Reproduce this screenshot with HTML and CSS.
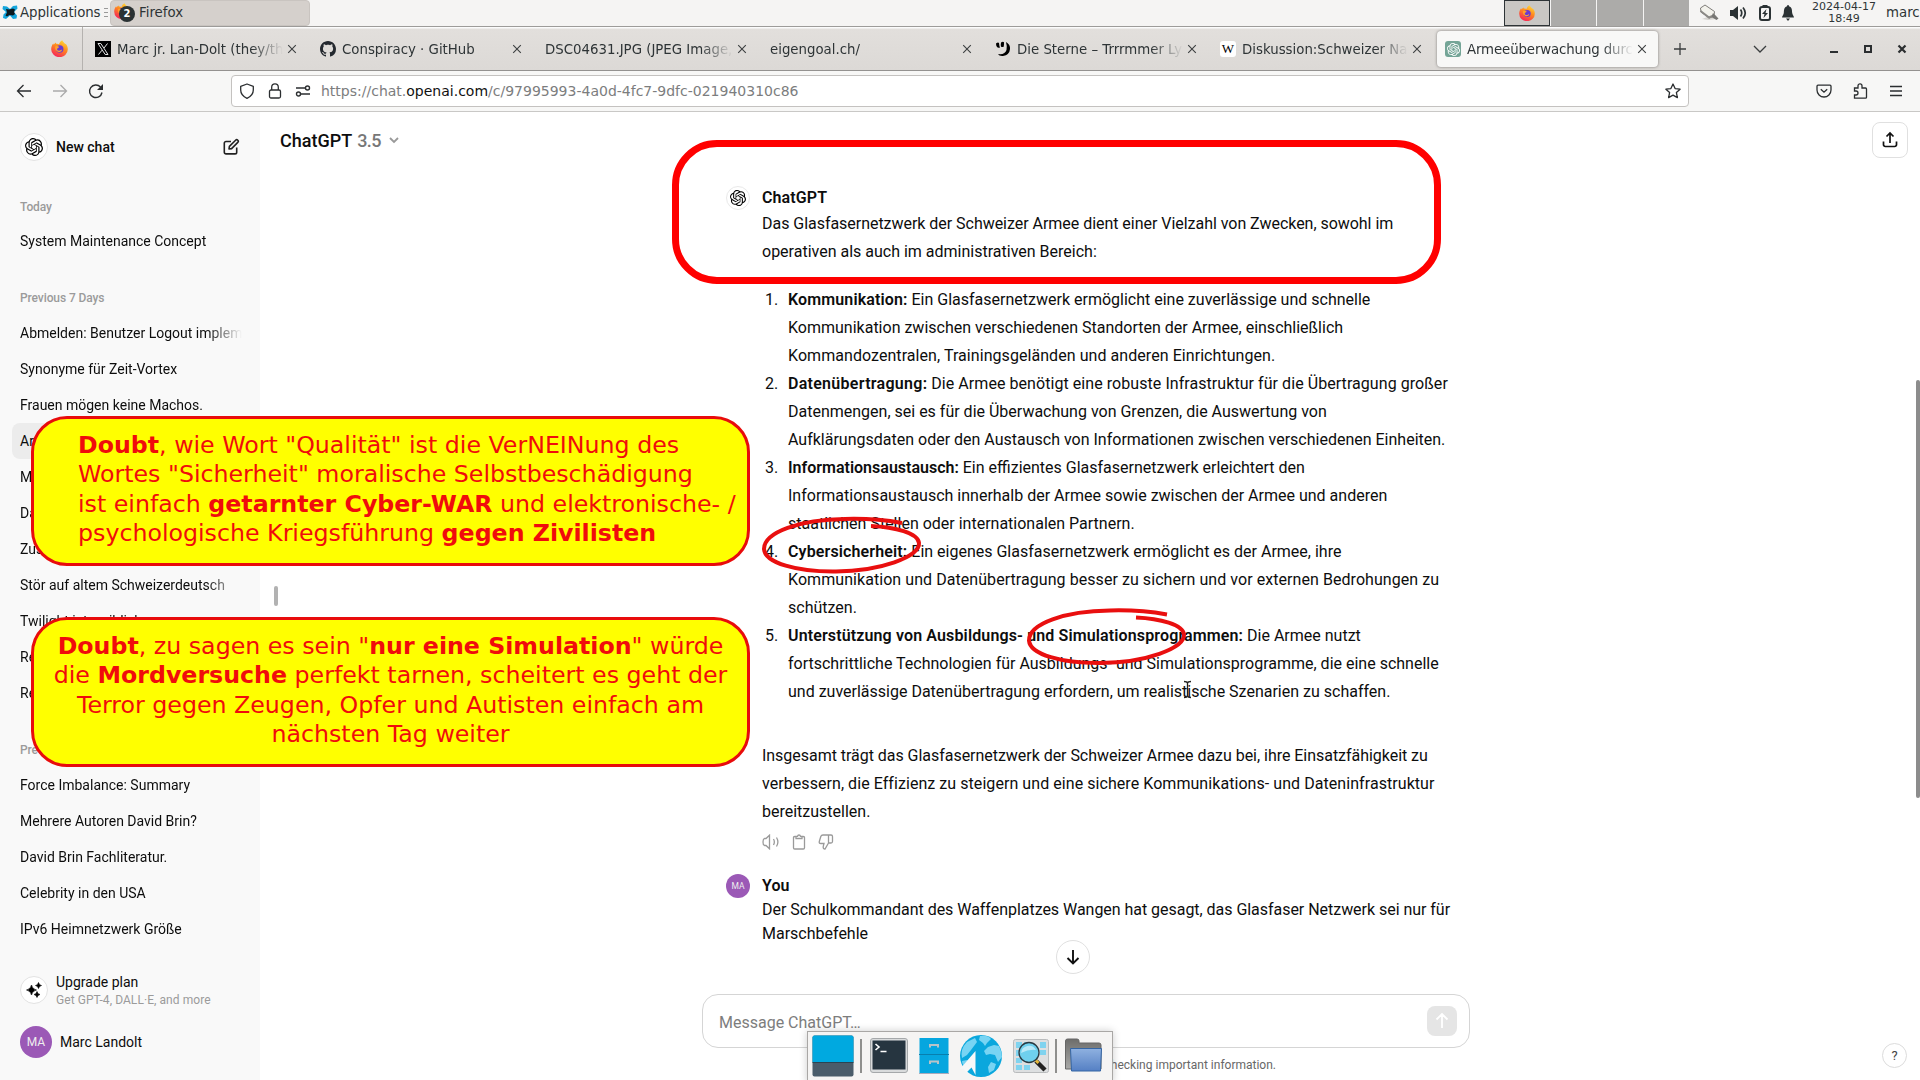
FILE: index.html
```html
<!DOCTYPE html>
<html lang="de">
<head>
<meta charset="utf-8">
<title>Armeeüberwachung durch Glasfaser</title>
<link rel="stylesheet" href="styles.css">
</head>
<body>
<svg width="0" height="0" class="defs">
  <defs>
    <linearGradient id="fx" x1=".8" y1="0" x2=".3" y2="1"><stop offset="0" stop-color="#ffe03a"/><stop offset=".45" stop-color="#ff8a1e"/><stop offset="1" stop-color="#f5225c"/></linearGradient>
    <linearGradient id="fold" x1="0" y1="0" x2="0" y2="1"><stop offset="0" stop-color="#8fb1e0"/><stop offset="1" stop-color="#5580c4"/></linearGradient>
    <linearGradient id="foldback" x1="0" y1="0" x2="0" y2="1"><stop offset="0" stop-color="#6d6d6b"/><stop offset="1" stop-color="#a9a9a7"/></linearGradient>
    <symbol id="firefox" viewBox="0 0 16 16"><path fill="url(#fx)" d="M10.6.2c.4 1.3 1.700 2.200 2.600 3.300.5-.1.700.3 1 .6 1.100 1.400 1.700 3 1.600 4.800A7.800 7.300 0 0 1 .2 8.800C.1 6.500 1 4.500 2.200 3.200l.3 1.300C3.100 3.600 3.900 2.800 4.700 2.400l.1 1.200c1.200-.3 2 0 2.700.5C7.900 2.500 9 .9 10.600.2z"/><circle cx="8.200" cy="8.400" r="3.500" fill="#6a3bd0"/><path fill="#ffa02a" d="M4 6.200c1.500-.9 2.600-.4 3.700.3-.2.700-1.400.800-1.900 1.700-.3 1 .6 2 1.800 1.900 1.300-.1 1.800-1 2.700-.8-.4 1.600-2.200 2.400-3.900 1.800C4.300 10.300 3.500 8.200 4 6.200z"/></symbol>
    <symbol id="openai" viewBox="0 0 24 24"><path d="M22.2819 9.8211a5.9847 5.9847 0 0 0-.5157-4.9108 6.0462 6.0462 0 0 0-6.5098-2.9A6.0651 6.0651 0 0 0 4.9807 4.1818a5.9847 5.9847 0 0 0-3.9977 2.9 6.0462 6.0462 0 0 0 .7427 7.0966 5.98 5.98 0 0 0 .511 4.9107 6.051 6.051 0 0 0 6.5146 2.9001A5.9847 5.9847 0 0 0 13.2599 24a6.0557 6.0557 0 0 0 5.7718-4.2058 5.9894 5.9894 0 0 0 3.9977-2.9001 6.0557 6.0557 0 0 0-.7475-7.0729zm-9.022 12.6081a4.4755 4.4755 0 0 1-2.8764-1.0408l.1419-.0804 4.7783-2.7582a.7948.7948 0 0 0 .3927-.6813v-6.7369l2.02 1.1686a.071.071 0 0 1 .038.052v5.5826a4.504 4.504 0 0 1-4.4945 4.4944zm-9.6607-4.1254a4.4708 4.4708 0 0 1-.5346-3.0137l.142.0852 4.783 2.7582a.7712.7712 0 0 0 .7806 0l5.8428-3.3685v2.3324a.0804.0804 0 0 1-.0332.0615L9.74 19.9502a4.4992 4.4992 0 0 1-6.1408-1.6464zM2.3408 7.8956a4.485 4.485 0 0 1 2.3655-1.9728V11.6a.7664.7664 0 0 0 .3879.6765l5.8144 3.3543-2.0201 1.1685a.0757.0757 0 0 1-.071 0l-4.8303-2.7865A4.504 4.504 0 0 1 2.3408 7.872zm16.5963 3.8558L13.1038 8.364 15.1192 7.2a.0757.0757 0 0 1 .071 0l4.8303 2.7913a4.4944 4.4944 0 0 1-.6765 8.1042v-5.6772a.79.79 0 0 0-.407-.667zm2.0107-3.0231l-.142-.0852-4.7735-2.7818a.7759.7759 0 0 0-.7854 0L9.409 9.2297V6.8974a.0662.0662 0 0 1 .0284-.0615l4.8303-2.7866a4.4992 4.4992 0 0 1 6.6802 4.66zM8.3065 12.863l-2.02-1.1638a.0804.0804 0 0 1-.038-.0567V6.0742a4.4992 4.4992 0 0 1 7.3757-3.4537l-.142.0805L8.704 5.459a.7948.7948 0 0 0-.3927.6813zm1.0976-2.3654l2.602-1.4998 2.6069 1.4998v2.9994l-2.5974 1.4997-2.6067-1.4997Z"/></symbol>
    <symbol id="x" viewBox="0 0 10 10"><path d="M1.200 1.200l7.600 7.600M8.800 1.200L1.200 8.800" fill="none" stroke="#3c3f40" stroke-width="1.100"/></symbol>
  </defs>
</svg>

<header class="panel">
  <div class="apps">
    <svg width="16" height="16" viewBox="0 0 16 16"><path fill="#14a5dc" d="M1 2l4 .5L8 5l3-3 4-.5.5 3L12 8l3 3.500-.5 3-3.500.5L8 11.500 4 15l-3-1 .5-3.500L4 8 .5 5z"/><path fill="#0d1a20" d="M4 5l3 .5 4-1 2 1-1 2.500 1 2-2 1.500-3.500-.5-2.500 1.500-1.500-1L5 8.500z"/></svg>
    <span>Applications</span>
  </div>
  <div class="grip"></div>
  <div class="task">
    <span class="task-ico"><svg width="16" height="16"><use href="#firefox"/></svg><b>2</b></span>
    <span>Firefox</span>
  </div>
  <div class="spaces"><i class="on"><svg width="16" height="16"><use href="#firefox"/></svg></i><i></i><i></i><i></i></div>
  <div class="tray">
    <svg width="22" height="20" viewBox="0 0 22 20"><path d="M4 16l6 1 9-1-1-4-6 1z" fill="#d5d3cf"/><path d="M2.500 5l4.500-3 9.500 6.500-.5 4.500-4.500 2L3 9z" fill="#f3f2ec" stroke="#7f7d79"/><path d="M2.500 8l8.500 6.500 4.500-2" fill="none" stroke="#8b8986" stroke-width="2"/><path d="M15 10l5.500 5.500-2 1.500-5-3z" fill="#777673"/></svg>
    <svg width="18" height="16" viewBox="0 0 18 16"><path d="M0 5h3l5-4v14l-5-4H0z" fill="#2b3234"/><path d="M10.500 4.500q2.500 3.500 0 7M13 2.500q4.500 5.500 0 11" fill="none" stroke="#2b3234" stroke-width="1.700"/></svg>
    <svg width="14" height="16" viewBox="0 0 14 16"><path d="M4.500 0h5v1.500h-5z" fill="#2b3234"/><rect x="2" y="2" width="10" height="13" rx="2" fill="none" stroke="#2b3234" stroke-width="2"/><path d="M8.500 4L4 9h2.500L5.500 13 10 8H7.500z" fill="#2b3234"/></svg>
    <svg width="12" height="16" viewBox="0 0 12 16"><path d="M6 0q1 0 1 1.200C10 2 10 5 10.200 8c.2 2 1.800 3 1.800 4.500H0C0 11 1.600 10 1.800 8 2 5 2 2 5 1.200 5 0 6 0 6 0zM4 13.500h4L6 16z" fill="#2b3234"/></svg>
  </div>
  <div class="clock">2024-04-17<br>18:49</div>
  <div class="user">marc</div>
</header>

<div class="tabbar">
  <div class="pinned"><svg width="17" height="17"><use href="#firefox"/></svg></div>
  <div class="tabs">
    <div class="tab"><svg width="16" height="16"><rect width="16" height="16"/><path d="M3 2.500h2.800L13 13.500h-2.800zM12.500 2.500L9 7M7 9.200L3.500 13.500" fill="none" stroke="#e5e5e5" stroke-width="1"/></svg><span>Marc jr. Lan-Dolt (they/them)</span><svg class="cl"><use href="#x"/></svg></div>
    <div class="tab"><svg width="16" height="16" viewBox="0 0 16 16"><path fill="#24292f" d="M8 0C3.580 0 0 3.580 0 8c0 3.540 2.290 6.530 5.470 7.590.4.070.55-.17.55-.38 0-.19-.01-.82-.01-1.490-2.010.37-2.530-.49-2.690-.94-.09-.23-.48-.94-.82-1.130-.28-.15-.68-.52-.01-.53.63-.01 1.080.58 1.230.82.72 1.210 1.870.87 2.330.66.07-.52.28-.87.51-1.070-1.780-.2-3.640-.89-3.640-3.950 0-.87.31-1.590.82-2.150-.08-.2-.36-1.020.08-2.120 0 0 .67-.21 2.200.82.64-.18 1.320-.27 2-.27s1.360.09 2 .27c1.530-1.040 2.200-.82 2.200-.82.44 1.100.16 1.920.08 2.120.51.56.82 1.270.82 2.150 0 3.070-1.870 3.750-3.650 3.950.29.25.54.73.54 1.480 0 1.070-.01 1.930-.01 2.200 0 .21.15.46.55.38A8.010 8.010 0 0 0 16 8c0-4.420-3.580-8-8-8z"/></svg><span>Conspiracy · GitHub</span><svg class="cl"><use href="#x"/></svg></div>
    <div class="tab"><span>DSC04631.JPG (JPEG Image, 51</span><svg class="cl"><use href="#x"/></svg></div>
    <div class="tab"><span>eigengoal.ch/</span><svg class="cl"><use href="#x"/></svg></div>
    <div class="tab"><svg width="16" height="16" viewBox="0 0 16 16"><path d="M1 2.500q2-1.500 3-.5.2 3 1 4.500-2 .8-3-.5-1-1.500-1-3.500zM6 1.500q2-1.200 3-.2.200 2.500-.5 4.700-2 .3-2.500-.5-.5-1.500 0-4zM11 1q4.500 2.500 4 7-.5 6-7 7-4 .3-5-2 7 1 8.500-4 .8-4-.5-8z"/></svg><span>Die Sterne – Trrrmmer Lyrics</span><svg class="cl"><use href="#x"/></svg></div>
    <div class="tab"><i class="wiki">W</i><span>Diskussion:Schweizer Nationa</span><svg class="cl"><use href="#x"/></svg></div>
    <div class="tab active"><i class="gpt"><svg width="13" height="13" fill="#fff"><use href="#openai"/></svg></i><span>Armeeüberwachung durch</span><svg class="cl"><use href="#x"/></svg></div>
  </div>
  <div class="winctl">
    <svg width="14" height="14"><path d="M7 1v12M1 7h12" stroke="#3a3d3e" stroke-width="1.300"/></svg>
    <svg width="14" height="14"><path d="M1 4l6 6 6-6" fill="none" stroke="#3a3d3e" stroke-width="1.300"/></svg>
    <svg width="10" height="10"><path d="M1 8h8" stroke="#2b2e30" stroke-width="2"/></svg>
    <svg width="8" height="8"><path d="M1 1h6v6H1z" fill="none" stroke="#2b2e30" stroke-width="2"/></svg>
    <svg width="10" height="10"><path d="M1.500 1.500l7 7M8.500 1.500l-7 7" stroke="#2b2e30" stroke-width="2.200"/></svg>
  </div>
</div>

<nav class="toolbar">
  <div class="navbtns">
    <svg width="16" height="16"><path d="M15 8H2M7.500 2L1.500 8l6 6" fill="none" stroke="#2b2e30" stroke-width="1.300"/></svg>
    <svg width="16" height="16"><path d="M1 8h13M8.500 2l6 6-6 6" fill="none" stroke="#aaa" stroke-width="1.300"/></svg>
    <svg width="16" height="16"><path d="M14 9.500A6.300 6.300 0 1 1 12.500 4" fill="none" stroke="#2b2e30" stroke-width="1.400"/><path d="M15 1v6H9z" fill="#2b2e30"/></svg>
  </div>
  <div class="urlbar">
    <svg width="16" height="16"><path d="M8 1l6.300 2.300V7c0 4-2.300 6.500-6.300 8.300C4 13.500 1.700 11 1.700 7V3.300z" fill="none" stroke="#2b2e30" stroke-width="1.300" stroke-linejoin="round"/></svg>
    <svg width="16" height="16"><rect x="2.500" y="7" width="11" height="8" rx="1.500" fill="none" stroke="#2b2e30" stroke-width="1.300"/><path d="M4.700 7V4.200a3.300 3.300 0 0 1 6.600 0V7" fill="none" stroke="#2b2e30" stroke-width="1.300"/></svg>
    <svg width="16" height="16"><g fill="none" stroke="#2b2e30" stroke-width="1.400"><path d="M1 5h9M6 11h9"/><circle cx="12.500" cy="5" r="2"/><circle cx="3.500" cy="11" r="2"/></g></svg>
    <span class="url">https://chat.<b>openai.com</b>/c/97995993-4a0d-4fc7-9dfc-021940310c86</span>
    <svg width="16" height="16" viewBox="0 0 16 16"><path d="M8 1l2.100 4.600 5 .6-3.700 3.400 1 5L8 12.100l-4.400 2.500 1-5L.9 6.200l5-.6z" fill="none" stroke="#2b2e30" stroke-width="1.300" stroke-linejoin="round"/></svg>
  </div>
  <div class="tools">
    <svg width="16" height="16"><path d="M2 2.200h12q1 0 1 1V7a7 7 0 0 1-14 0V3.200q0-1 1-1zM4.800 6.200L8 9.200l3.200-3" fill="none" stroke="#2b2e30" stroke-width="1.300"/></svg>
    <svg width="16" height="16"><path d="M2.500 15.200V12H4a2 2 0 0 0 0-4H2.500V5H6V2.800a2 2 0 0 1 4 0V5h3.500q1 0 1 1v8.200q0 1-1 1z" fill="none" stroke="#2b2e30" stroke-width="1.300"/></svg>
    <svg width="16" height="16"><path d="M2 3.500h12M2 8h12M2 12.500h12" stroke="#2b2e30" stroke-width="1.300"/></svg>
  </div>
</nav>

<div class="app">
  <aside class="side">
    <div class="newchat"><span class="ring"><svg width="18" height="18"><use href="#openai"/></svg></span><b>New chat</b>
      <svg width="18" height="18" viewBox="0 0 18 18"><path d="M9 3.500H4a1.700 1.700 0 0 0-1.700 1.700v9A1.700 1.700 0 0 0 4 15.900h9a1.700 1.700 0 0 0 1.700-1.700V9.500M7 11l.4-2.600 6.200-6.200a1.500 1.500 0 0 1 2.200 2.200l-6.200 6.200z" fill="none" stroke="#222" stroke-width="1.600" stroke-linejoin="round"/></svg></div>
    <section><h3>Today</h3><p>System Maintenance Concept</p></section>
    <section><h3>Previous 7 Days</h3>
      <p>Abmelden: Benutzer Logout implementieren</p><p>Synonyme für Zeit-Vortex</p><p>Frauen mögen keine Machos.</p><p class="cur">Armee</p><p>Ma</p><p>Da</p><p>Zusatz</p><p>Stör auf altem Schweizerdeutsch</p><p>Twilight ist weiblich</p><p>Re</p><p>Re</p></section>
    <section><h3>Previous 30 Days</h3>
      <p>Force Imbalance: Summary</p><p>Mehrere Autoren David Brin?</p><p>David Brin Fachliteratur.</p><p>Celebrity in den USA</p><p>IPv6 Heimnetzwerk Größe</p></section>
    <div class="upgrade"><span class="ring"><svg width="18" height="18" viewBox="0 0 18 18"><path d="M6.500 4q.8 4.200 5 5-4.200.8-5 5-.8-4.200-5-5 4.200-.8 5-5zM13.500 1.500q.5 2.500 3 3-2.500.5-3 3-.5-2.500-3-3 2.500-.5 3-3zM12 10.500q.5 2.500 3 3-2.500.5-3 3-.5-2.500-3-3 2.500-.5 3-3z" stroke="#000" stroke-width=".6"/></svg></span><div>Upgrade plan<small>Get GPT-4, DALL·E, and more</small></div></div>
    <div class="me"><span class="av big">MA</span>Marc Landolt</div>
  </aside>

  <main class="main">
    <div class="top">
      <div class="model">ChatGPT <span>3.5</span><svg width="12" height="12"><path d="M2 4l4 4 4-4" fill="none" stroke="#999" stroke-width="1.800"/></svg></div>
      <button class="share"><svg width="18" height="18"><path d="M9 12V2.500M5.500 5.500L9 2l3.500 3.500M2.500 10.500v3.200A1.800 1.800 0 0 0 4.300 15.500h9.400a1.800 1.800 0 0 0 1.800-1.800v-3.200" fill="none" stroke="#111" stroke-width="1.700"/></svg></button>
    </div>
    <div class="thread">
      <article class="msg">
        <span class="logo"><svg width="16" height="16"><use href="#openai"/></svg></span>
        <div class="body">
          <h4>ChatGPT</h4>
          <p class="ln"><span class="tight">Das Glasfasernetzwerk der Schweizer Armee dient einer Vielzahl von Zwecken, sowohl im</span><br>operativen als auch im administrativen Bereich:</p>
          <ol>
            <li><b>Kommunikation:</b> Ein Glasfasernetzwerk ermöglicht eine zuverlässige und schnelle<br>Kommunikation zwischen verschiedenen Standorten der Armee, einschließlich<br><span class="loose">Kommandozentralen, Trainingsgeländen und anderen Einrichtungen.</span></li>
            <li class="wide"><b>Datenübertragung:</b> <span class="loose">Die Armee benötigt eine robuste Infrastruktur für die Übertragung großer</span><br>Datenmengen, sei es für die Überwachung von Grenzen, die Auswertung von<br>Aufklärungsdaten oder den Austausch von Informationen zwischen verschiedenen Einheiten.</li>
            <li class="flat"><b>Informationsaustausch:</b> Ein effizientes Glasfasernetzwerk erleichtert den<br>Informationsaustausch innerhalb der Armee sowie zwischen der Armee und anderen<br>staatlichen Stellen oder internationalen Partnern.</li>
            <li><b>Cybersicherheit:</b> Ein eigenes Glasfasernetzwerk ermöglicht es der Armee, ihre<br><span class="loose">Kommunikation und Datenübertragung besser zu sichern und vor externen Bedrohungen zu</span><br>schützen.</li>
            <li><b>Unterstützung von Ausbildungs- und Simulationsprogrammen:</b> Die Armee nutzt<br>fortschrittliche Technologien für Ausbildungs- und Simulationsprogramme, die eine schnelle<br>und zuverlässige Datenübertragung erfordern, um realistische Szenarien zu schaffen.</li>
          </ol>
          <p class="ln"><span class="tight">Insgesamt trägt das Glasfasernetzwerk der Schweizer Armee dazu bei, ihre Einsatzfähigkeit zu</span><br><span class="loose">verbessern, die Effizienz zu steigern und eine sichere Kommunikations- und Dateninfrastruktur</span><br>bereitzustellen.</p>
          <div class="acts">
            <svg width="18" height="16"><path d="M7.500 1.200v13.600L4 11.500H2.500Q1 11 1 8t1.500-3.500H4zM11.500 5q1.700 3 0 6M14.500 3.500q2.800 4.500 0 9" fill="none"/></svg>
            <svg width="16" height="16"><path d="M5 2.500H3.700q-1.200 0-1.200 1.200v10q0 1.300 1.200 1.300h8.600q1.200 0 1.200-1.300v-10q0-1.200-1.200-1.200H11M5 4.500V2.300h1.500q.2-1.300 1.500-1.300t1.500 1.300H11v2.200z" fill="none"/></svg>
            <svg width="16" height="16"><path d="M11.500 1H5Q3.300 1 2.800 2.500L1.300 7.500q-.5 2 1.500 2H6l-.8 3q-.3 2.500 1.800 2.500L10.500 9M11.500 1H13q1.500 0 1.500 1.500v5Q14.500 9 13 9h-2.500V1" fill="none"/></svg>
          </div>
        </div>
      </article>
      <article class="msg you">
        <span class="av">MA</span>
        <div class="body"><h4>You</h4><p><span class="tight">Der Schulkommandant des Waffenplatzes Wangen hat gesagt, das Glasfaser Netzwerk sei nur für</span><br>Marschbefehle</p></div>
      </article>
    </div>
    <div class="composer"><span>Message ChatGPT…</span><button><svg width="18" height="20"><path d="M9 17V3M3.500 8.500L9 3l5.500 5.500" fill="none" stroke="#fff" stroke-width="1.800"/></svg></button></div>
    <footer>ChatGPT can make mistakes. Consider checking important information.</footer>
  </main>
</div>

<div class="handle"></div>
<div class="scroll"></div>
<div class="down"><svg width="16" height="18"><path d="M8 2v13M2.500 10L8 15.500 13.500 10" fill="none" stroke="#111" stroke-width="1.900"/></svg></div>
<div class="help">?</div>

<div class="mark"></div>
<div class="note n1"><b>Doubt</b>, wie Wort "Qualität" ist die VerNEINung des<br>Wortes "Sicherheit" moralische Selbstbeschädigung<br>ist einfach <b>getarnter Cyber-WAR</b> und elektronische- /<br>psychologische Kriegsführung <b>gegen Zivilisten</b></div>
<div class="note n2"><b>Doubt</b>, zu sagen es sein "<b>nur eine Simulation</b>" würde<br>die <b>Mordversuche</b> perfekt tarnen, scheitert es geht der<br>Terror gegen Zeugen, Opfer und Autisten einfach am<br>nächsten Tag weiter</div>
<svg class="ink" width="460" height="210" viewBox="750 500 460 210">
  <g fill="none" stroke="#e90f0f" stroke-width="4">
    <path id="loop" d="M902 523C885 520 862 518.500 845 519C800 519.500 764 532 764 549C765 563 797 572 836 571.500C880 571 920 557 919 543C918 533 895 527 871 526"/>
    <use href="#loop" transform="translate(265 91.500)"/>
  </g>
  <path d="M1184 681.500q3 0 3.500 1.500q.5-1.500 3.500-1.500M1187.500 683v13M1184 697.500q3 0 3.500-1.500q.5 1.500 3.500 1.500" fill="none" stroke="#222" stroke-width="1.300"/>
</svg>

<div class="dock">
  <svg width="42" height="42"><rect x=".5" y=".5" width="41" height="41" rx="2" fill="#4a5c6a"/><path d="M.5 2.500q0-2 2-2h37q2 0 2 2V27H.5z" fill="#00a9e0"/><path d="M.5 27.500h41" stroke="#2b4452"/></svg>
  <hr>
  <svg width="38" height="38"><rect x=".5" y="1.500" width="37" height="34" rx="2.500" fill="#d9dbdc" stroke="#a5a8aa"/><rect x="2.500" y="3.500" width="33" height="29" fill="#263540"/><path d="M5.500 7l3.500 3-3.500 3M10.500 14.500h6" fill="none" stroke="#fff" stroke-width="1.600"/></svg>
  <svg width="30" height="38"><rect x=".5" y="1" width="29" height="35" fill="#06a6df"/><path d="M0 17.500h30" stroke="#087fae"/><path d="M0 36.500h30" stroke="#aab" /><path d="M11 10.500V8h8v2.500M11 27V24.500h8V27" fill="none" stroke="#b9c3c8" stroke-width="2"/></svg>
  <svg width="42" height="42"><circle cx="21" cy="21" r="21" fill="#0aa7dd"/><path d="M20 1q5-1 9 1l2 2-4 4-2 3-2-3-4-3zM7 7l8-4 2 4-3 4-3 4-4 5-5 3q-2-9 5-16zM24 16l4-4 6-2 5 1q3 6 3 11l-4 5-3-7-5-1-4 1zM31 27l5 2-2 6-5 3-1-6zM2 26l5-1 5 3-2 6-4-1q-4-3-4-7z" fill="#78d4f3"/><path d="M15.500 16v24l-4-7.500-5 5L3 33.500 0 34z" fill="#f8f8f8"/></svg>
  <svg width="36" height="38"><rect x=".5" y="2.500" width="35" height="33" rx="2" fill="#dddfe0" stroke="#b9bbbc"/><path d="M3 5h6v6H3zM11 5h6v6h-6zM27 5h6v6h-6zM3 13h6v6H3zM27 13h6v5h-6zM3 21h6v5H3zM3 28h6v5H3zM11 28h6v5h-6z" fill="#7fd3ef"/><path d="M23 24l9 9" stroke="#222" stroke-width="4.500"/><path d="M22.500 23l3 3" stroke="#e6b93c" stroke-width="3"/><circle cx="16" cy="15.500" r="10" fill="#6fd0ee" stroke="#2a3a42" stroke-width="1.300"/><path d="M8 16a8 8 0 0 1 15-3q-7-1-15 3z" fill="#b9e9f8"/></svg>
  <hr>
  <svg width="38" height="36"><path d="M.5 3q0-2 2-2H12q2 0 2 2v2h20q2 0 2 2v24H.5z" fill="url(#foldback)" stroke="#666"/><path d="M5.500 10.500h31L35.500 33h-29z" fill="url(#fold)" stroke="#3465a4"/></svg>
</div>
</body>
</html>
```
FILE: styles.css
```css
*{box-sizing:border-box}
body{margin:0;width:1920px;height:1080px;overflow:hidden;position:relative;display:grid;grid-template-rows:27px 44px 41px 1fr;background:#fff;font-family:"DejaVu Sans",sans-serif;font-size:13.33px;color:#2e3436}
svg{display:block;flex:none}
.defs{position:absolute}
i{font-style:normal}
p,h3,h4{margin:0}
button{padding:0;border:0;background:none}

.panel{display:flex;align-items:center;background:#f5f4f3;border-bottom:1px solid #9d9b99}
.apps{display:flex;gap:2px;padding-left:2px;width:104px;align-items:center;letter-spacing:-.08px;height:24px;margin-bottom:2px}
.grip{width:4px;height:10px;margin-right:2px;background:repeating-linear-gradient(#999 0 1px,transparent 1px 4px)}
.task{display:flex;align-items:center;align-self:flex-start;width:200px;height:26px;padding:0 0 1px 3px;gap:5px;background:#d5d0cc;border:1px solid #c9c4c0;border-radius:4px}
.task-ico{position:relative;width:20px;height:18px;display:block}
.task-ico svg{position:absolute;left:0;top:-1px}
.task-ico b{position:absolute;left:5px;top:2px;width:16px;height:16px;border-radius:8px;background:#2b3234;color:#fff;font-size:10px;line-height:15px;text-align:center}
.spaces{display:flex;gap:1px;margin-left:auto;height:26px}
.spaces i{width:45.500px;background:#acaba9;display:grid;place-items:center}
.spaces .on{background:#c9c7c4;border:1px solid #2d3336}
.tray{display:flex;align-items:center;gap:10px;margin-left:9px;width:113px}
.clock{width:66px;font-size:11px;line-height:12px;text-align:center}
.user{padding-left:9px;width:43px;white-space:nowrap;margin-bottom:2px}

.tabbar{display:flex;background:linear-gradient(#fbfbfb 0 1px,#e2dfdc 2px,#dcd9d6);border-bottom:1px solid #949290}
.pinned{width:83px;border-right:1px solid #b5b2af;padding:13px 0 0 51px}
.tabs{display:flex;gap:4px;padding:4px 0 3px 4px}
.tab{width:221px;height:36px;display:flex;align-items:center;padding:0 11px 0 8px;border-radius:4px}
.tab>svg:first-child,.tab>i{margin-right:6px}
.tab span{flex:1;min-width:0;overflow:hidden;white-space:nowrap;-webkit-mask:linear-gradient(90deg,#000 calc(100% - 32px),transparent);mask:linear-gradient(90deg,#000 calc(100% - 32px),transparent)}
.tab .cl{width:10px;height:10px;margin-left:4px}
.tab.active{background:#f8f8f7;box-shadow:0 0 3px #7d7a78}
.tab.active span{letter-spacing:-.12px}
.wiki,.gpt{width:16px;height:16px;flex:none;background:#fff;border-radius:3px;display:grid;place-items:center}
.wiki{font:13px/16px "Liberation Serif",serif;color:#000}
.gpt{background:#74a597}
.winctl{flex:1;display:grid;grid-template-columns:44px 116px 32px 36px 32px;place-items:center;align-content:center}

.toolbar{display:flex;align-items:center;background:#f7f7f6;border-bottom:1px solid #c9c8c6}
.navbtns{display:flex;gap:20px;padding-left:16px;width:231px}
.urlbar{width:1458px;height:32px;display:flex;align-items:center;gap:12px;padding:0 7px;background:#fff;border:1px solid #c4c2c0;border-radius:4px}
.url{flex:1;margin-left:-2px;font-size:14px;color:#7c7d7e}
.url b{font-weight:400;color:#111}
.tools{display:flex;gap:20px;margin-left:127px}

.app{display:grid;grid-template-columns:260px 1fr;font-family:Roboto,"Liberation Sans",sans-serif;color:#0d0d0d;min-height:0}
.side{background:#f9f9f9;font-size:14px;padding:0 12px;display:flex;flex-direction:column;min-height:0}
.ring{width:28px;height:28px;border:1px solid #e3e3e3;border-radius:50%;background:#fff;display:grid;place-items:center;flex:none}
.newchat{height:69px;display:flex;align-items:center;padding:0 8px;gap:8px;margin-bottom:8px}
.newchat b{flex:1;font-weight:500;padding-top:1px}
.side section{margin-bottom:21px}
.side h3{height:34px;line-height:36px;padding-left:8px;font-size:12px;font-weight:500;letter-spacing:-.1px;color:#9b9b9b}
.side section+section h3{height:35px}
.side p{height:36px;line-height:36px;padding:0 9px 0 8px;overflow:hidden;white-space:nowrap;border-radius:8px}
.side p:not(.cur){-webkit-mask:linear-gradient(90deg,#000 195px,transparent 230px);mask:linear-gradient(90deg,#000 195px,transparent 230px)}
.cur{background:#ececec}
.upgrade{display:flex;align-items:center;gap:8px;padding-left:8px;height:52px;line-height:20px;margin-top:-4px}
.upgrade small{display:block;font-size:12px;line-height:16px;letter-spacing:.07px;color:#9b9b9b}
.me{display:flex;align-items:center;gap:8px;padding-left:8px;height:52px}
.av{width:24px;height:24px;border-radius:50%;background:#9b59b6;color:#eee;font-size:8.500px;display:grid;place-items:center;flex:none}
.av.big{width:32px;height:32px;font-size:12px}

.main{display:flex;flex-direction:column;min-width:0}
.top{display:flex;justify-content:space-between;align-items:center;padding:0 12px 0 20px;height:56px}
.model{display:flex;align-items:center;gap:5px;font-size:18px;font-weight:500}
.model span{color:#777;letter-spacing:-.6px}
.model svg{margin-left:2px}
.share{width:36px;height:36px;border:1px solid #e0e0e0;border-radius:8px;display:grid;place-items:center}
.thread{flex:1;padding:18px 0 0 466px;font-size:16px;min-height:0;overflow:hidden}
.msg{display:flex;gap:12px}
.logo{width:24px;height:24px;border:1px solid #e9e9e9;border-radius:50%;display:grid;place-items:center}
.body{white-space:nowrap}
h4{font-size:16px;font-weight:600;line-height:24px;height:24px;letter-spacing:.1px}
.ln,ol{line-height:28px}
ol{margin:20px 0 36px;padding-left:26px;list-style:none;counter-reset:step}
li{counter-increment:step;display:grid;grid-template-columns:auto;position:relative;display:block}
li::before{content:counter(step) ".";display:inline-block;width:23px;margin-left:-23px}
ol b{font-weight:600;letter-spacing:.13px}
.wide b{letter-spacing:.28px}
.flat b{letter-spacing:0}
.loose{letter-spacing:.06px}
.tight{letter-spacing:-.035px}
.acts{display:flex;gap:11px;padding-top:8px;height:48px;stroke:#9a9a9a;stroke-width:1.300}
.you p{line-height:24px}
.composer{width:768px;height:54px;margin-left:442px;border:1px solid #d5d5d5;border-radius:16px;display:flex;align-items:center;justify-content:space-between;padding:0 12px 0 16px;font-size:16px;color:#7d7d7d;flex:none}
.composer span{padding-top:2px}
.composer button{width:30px;height:30px;border-radius:8px;background:#e5e5e5;display:grid;place-items:center}
footer{height:32px;width:768px;margin-left:441px;text-align:center;font-size:12px;line-height:35px;color:#676767}

.handle{position:absolute;left:274px;top:586px;width:4px;height:20px;border-radius:2px;background:#b2b2b2}
.scroll{position:absolute;left:1916px;top:380px;width:4px;height:418px;border-radius:2px;background:#8c8c8c}
.down{position:absolute;left:1056px;top:940px;width:34px;height:34px;border:1px solid #e0e0e0;border-radius:50%;background:#fff;display:grid;place-items:center}
.help{position:absolute;left:1882px;top:1043px;width:25px;height:25px;border:1px solid #dcdcdc;border-radius:50%;background:#fff;font:13px/23px Roboto,sans-serif;text-align:center;color:#444}
.mark{position:absolute;left:672px;top:139.500px;width:769px;height:144.500px;border:7.500px solid #f00;border-radius:45px}
.note{position:absolute;left:31px;width:719px;height:150px;border:3px solid #e80c0c;border-radius:36px;background:#ff0;color:#f00c0c;font-size:23.700px;line-height:29.600px;white-space:nowrap;padding-top:12px}
.n1{top:415.500px;padding-left:44px}
.n2{top:616.500px;text-align:center}
.ink{position:absolute;left:750px;top:500px}
.dock{position:absolute;left:807px;top:1031px;width:306px;height:52px;background:#f5f4f3;border:1px solid #a9a7a5;box-shadow:0 0 8px rgba(0,0,0,.2);display:flex;align-items:center;padding:0 5px 2px 3.500px;gap:11px}
.dock hr{width:2px;height:34px;margin:0 -3px 0 -5px;border:0;background:#8f8f8d;flex:none}
```
